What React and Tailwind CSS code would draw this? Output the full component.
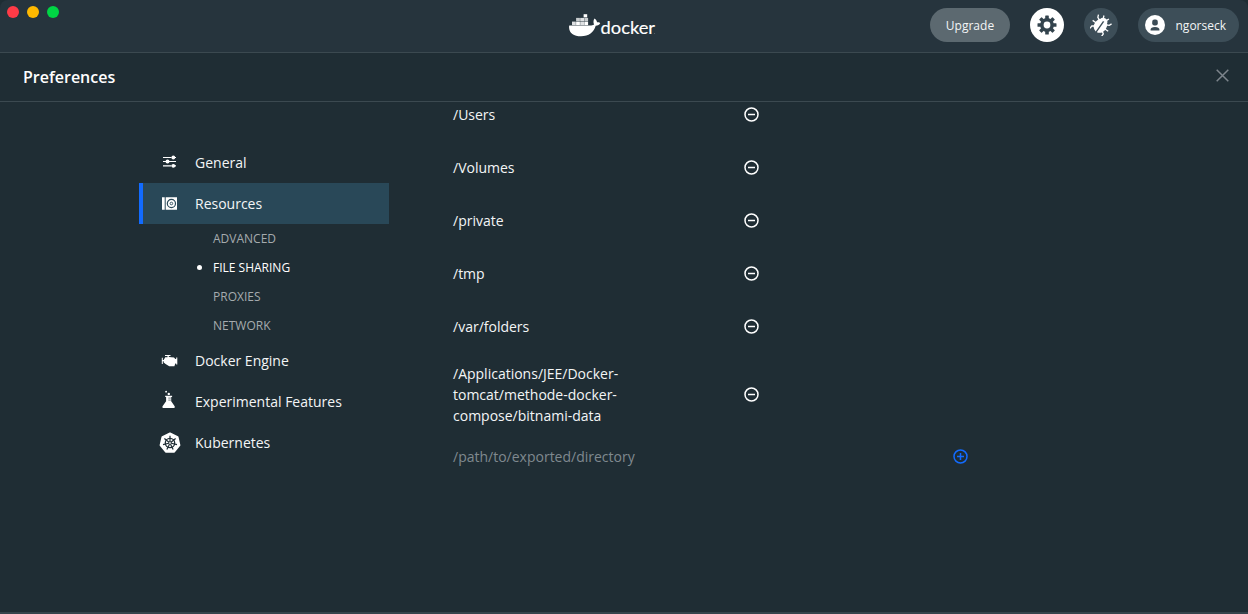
import React from "react";

const paths = ["/Users", "/Volumes", "/private", "/tmp", "/var/folders"];
const resourcePages = ["ADVANCED", "FILE SHARING", "PROXIES", "NETWORK"];

function DockerLogo() {
  return (
    <svg width="88" height="26" viewBox="0 0 88 26" className="ml-px mt-[-1px] block" fill="#fff">
      <rect x="3" y="8.6" width="3.8" height="3.5" fillOpacity="0.85" />
      <rect x="7.1" y="8.6" width="3.8" height="3.5" />
      <rect x="11.2" y="8.6" width="3.8" height="3.5" fillOpacity="0.85" />
      <rect x="15.3" y="8.6" width="3.8" height="3.5" />
      <rect x="7.1" y="4.9" width="3.8" height="3.3" fillOpacity="0.75" />
      <rect x="11.2" y="4.9" width="3.8" height="3.3" fillOpacity="0.85" />
      <rect x="15.3" y="4.9" width="3.8" height="3.3" fillOpacity="0.75" />
      <rect x="14.600" y="1.2" width="3.6" height="3.2" />
      <path d="M0.3 12.4h21.9c1.500 0 2.400-.4 2.900-.8-1-1.800-.8-4.300.4-6 1.500.9 2.300 2.200 2.500 3.700 1.300-.2 2.700 0 3.300.8-.8 1.800-2.400 2.600-4.600 2.600C24.600 19.600 20 23.200 12 23.200 4.600 23.200-.4 19.800.1 13.300z" />
      <text x="31.500" y="20.700" fontFamily="Lato, 'Open Sans', sans-serif" fontSize="17.500" fontWeight="400" stroke="#fff" strokeWidth="0.150" textLength="54.500" lengthAdjust="spacingAndGlyphs">docker</text>
      <circle cx="85.700" cy="20.300" r="0.400" fillOpacity="0.6" />
    </svg>
  );
}

function GearIcon() {
  return (
    <svg width="20" height="20" viewBox="-10 -10 20 20" fill="#33434d">
      {[0, 45, 90, 135].map((a) => (
        <rect key={a} x="-1.8" y="-9.5" width="3.6" height="19" rx="0.6" transform={`rotate(${a})`} />
      ))}
      <circle r="6.900" />
      <circle r="3.400" fill="#fff" />
    </svg>
  );
}

function BugIcon() {
  return (
    <svg width="22" height="22" viewBox="-11 -11 22 22" fill="none">
      <g transform="rotate(35)">
        <path d="M-4-3-7-4.500-8-7M-5 1h-4.500M-4 4-7 6-7 9M4-3 7-4.500 8-7M5 1h4.500M4 4 7 6 7 9M-2-7-3-9.500M2-7 3-9.500" stroke="#fff" strokeWidth="1.300" />
        <path d="M-4.200-4.500a4.300 4.300 0 0 1 8.400 0zM-.7-4.500V8.300C-4 7.800-6.200 5-6.200 1.400c0-2.400.6-4.400 1.600-5.900zM.7-4.500V8.300C4 7.800 6.200 5 6.200 1.400c0-2.400-.6-4.400-1.600-5.900z" fill="#fff" />
      </g>
    </svg>
  );
}

function UserIcon() {
  return (
    <svg width="20" height="20" viewBox="0 0 20 20">
      <circle cx="10" cy="10" r="10" fill="#fff" />
      <rect x="7.200" y="4.600" width="5.600" height="5.800" rx="2.200" fill="#3b4c56" />
      <path d="M5.600 15.400v-.9c0-1.700 1.600-2.600 4.400-2.600s4.400.9 4.400 2.600v.9z" fill="#3b4c56" />
    </svg>
  );
}

function SlidersIcon() {
  return (
    <svg width="15" height="13" viewBox="0 0 15 13" className="-mt-[2px]">
      <path d="M1 2.500h8.500M11 2.500h3M1 6.500h13M1 10.800h8.500M11 10.800h3" stroke="#fff" strokeWidth="1.200" />
      <circle cx="11.300" cy="2.500" r="1.900" fill="#fff" />
      <circle cx="5.500" cy="6.500" r="2" fill="#fff" />
      <circle cx="11.300" cy="10.800" r="1.900" fill="#fff" />
    </svg>
  );
}

function DriveIcon() {
  return (
    <svg width="15" height="13" viewBox="0 0 15 13" className="-mt-px">
      <path d="M0 .200h2.700v12.600H0zM3.700.200H15v12.600H3.700z" fill="#fff" />
      <circle cx="9.400" cy="6.500" r="4.100" fill="none" stroke="#294858" strokeWidth="1.200" />
      <circle cx="9.400" cy="6.500" r="1.300" fill="none" stroke="#294858" strokeWidth="0.900" />
    </svg>
  );
}

function EngineIcon() {
  return (
    <svg width="17" height="14" viewBox="0 0 17 14" className="mr-px">
      <path d="M4.200 3.300h2.300V2.100H4V1.100h5.500v1H7.800v.9l5.200.5 1.300 1.600h.9V3.600h1.100v7h-1.100V9.400H14.300l-.9 2.900H8.200L4.600 10 2.700 8.400V7.300H1.800v2.600H.8V3.800h1v2.200h.9z" fill="#fff" />
    </svg>
  );
}

function FlaskIcon() {
  return (
    <svg width="15" height="19" viewBox="0 0 15 19" fill="#fff" className="-mt-[5px] mr-[2px]">
      <circle cx="5.100" cy="1.700" r="0.900" />
      <circle cx="7.800" cy="3.900" r="1.200" />
      <path d="M4.200 5.700h6.900v1.200h-.9v4.300l3.300 4.700c.7 1.200.2 2.200-1 2.200H2.700c-1.200 0-1.700-1-1-2.200l3.400-4.700V6.900h-.9z" />
      <path d="M7.300 8.100h2.600M7.300 10.100h2.600" stroke="#1f2d34" strokeWidth="0.600" />
    </svg>
  );
}

function KubernetesIcon() {
  return (
    <svg width="22" height="22" viewBox="-11 -11 22 22">
      <path d="M0-9.600 7.600-6 9.500 2.200 4.200 8.800H-4.200L-9.500 2.200-7.600-6z" fill="#fff" stroke="#fff" strokeWidth="1.800" strokeLinejoin="round" />
      <g stroke="#1f2d34" fill="none">
        <circle r="4.700" strokeWidth="1.300" />
        {[0, 51.43, 102.86, 154.29, 205.71, 257.14, 308.57].map((a) => (
          <path key={a} d="M0-1.300V-7.200" strokeWidth="1.200" transform={`rotate(${a})`} />
        ))}
        <circle r="1.400" strokeWidth="0.800" />
      </g>
    </svg>
  );
}

function CircleButton({ plus = false }) {
  return (
    <button className={plus ? "text-[#126bff]" : "text-white"} aria-label={plus ? "Add" : "Remove"}>
      <svg width="15" height="15" viewBox="0 0 15 15" className="block" fill="none" stroke="currentColor" strokeWidth="1.500">
        <circle cx="7.500" cy="7.500" r="6.500" />
        <path d={plus ? "M4 7.500h7M7.500 4v7" : "M4 7.500h7"} />
      </svg>
    </button>
  );
}

function NavItem({ icon, label, active = false }) {
  return (
    <div className={`flex h-[41px] w-[250px] items-center border-l-4 ${active ? "border-[#126bff] bg-[#294858]" : "border-transparent"}`}>
      <span className="ml-[15px] flex w-[23px] items-center justify-center">{icon}</span>
      <span className="ml-[14px]">{label}</span>
    </div>
  );
}

export default function App() {
  return (
    <div className="flex h-[614px] w-[1248px] flex-col overflow-hidden border-b-2 border-[#35444c] bg-[#1f2d34] font-['Open_Sans',sans-serif] text-[14px] leading-[21px] text-[#f3f5f6]">
      <header className="grid h-[53px] shrink-0 grid-cols-[568px_1fr_auto] rounded-t-[8px] border-b border-[#3b4950] bg-[#26343d]">
        <div className="flex gap-2 pl-[7px] pt-[6px]">
          <span className="size-3 rounded-full bg-[#ff3b47]" />
          <span className="size-3 rounded-full bg-[#ffb900]" />
          <span className="size-3 rounded-full bg-[#00d544]" />
        </div>
        <div className="pt-[14px]"><DockerLogo /></div>
        <div className="flex items-start pr-[9px] pt-2 text-[12px]">
          <button className="mr-5 h-[34px] w-20 rounded-full bg-[#5c6970]">Upgrade</button>
          <button className="mr-5 flex size-[34px] items-center justify-center rounded-full bg-white" aria-label="Settings"><GearIcon /></button>
          <button className="mr-5 flex size-[34px] items-center justify-center rounded-full bg-[#3d4e58]" aria-label="Troubleshoot"><BugIcon /></button>
          <button className="flex h-[34px] w-[101px] items-center rounded-full bg-[#3d4e58] pl-[7px]">
            <UserIcon />
            <span className="ml-[10.5px]">ngorseck</span>
          </button>
        </div>
      </header>
      <div className="flex h-[49px] shrink-0 items-center justify-between border-b border-[#3b4950] pl-[23px] pr-[19px]">
        <h1 className="text-[16px] font-semibold text-white">Preferences</h1>
        <svg width="13" height="13" viewBox="0 0 13 13" className="-mt-[3px]" stroke="#7d858c" strokeWidth="1.500">
          <path d="M.7.700l11.600 11.600M12.300.700.7 12.300" />
        </svg>
      </div>
      <div className="flex min-h-0 flex-1 overflow-hidden">
        <nav className="ml-[139px] w-[250px] shrink-0 pt-10">
          <NavItem icon={<SlidersIcon />} label="General" />
          <NavItem icon={<DriveIcon />} label="Resources" active />
          <ul className="text-[12px]">
            {resourcePages.map((page) => {
              const current = page === "FILE SHARING";
              return (
                <li key={page} className={`flex h-[29px] items-center pl-[58px] ${current ? "text-white" : "text-[#a5abae]"}`}>
                  <span className={`mr-[11px] size-[5px] rounded-full ${current ? "bg-white" : "bg-transparent"}`} />
                  {page}
                </li>
              );
            })}
          </ul>
          <NavItem icon={<EngineIcon />} label="Docker Engine" />
          <NavItem icon={<FlaskIcon />} label="Experimental Features" />
          <NavItem icon={<KubernetesIcon />} label="Kubernetes" />
        </nav>
        <main className="-mt-[14px] ml-16 w-[515px] shrink-0">
          {paths.map((path) => (
            <div key={path} className="flex h-[53px] w-[306px] items-center justify-between">
              <span>{path}</span>
              <CircleButton />
            </div>
          ))}
          <div className="flex h-[83px] w-[306px] items-center justify-between">
            <span className="w-[190px]">/Applications/JEE/Docker-<br />tomcat/methode-docker-<br />compose/bitnami-data</span>
            <CircleButton />
          </div>
          <div className="flex h-[41px] items-center justify-between text-[#7f898f]">
            <span>/path/to/exported/directory</span>
            <CircleButton plus />
          </div>
        </main>
      </div>
    </div>
  );
}
